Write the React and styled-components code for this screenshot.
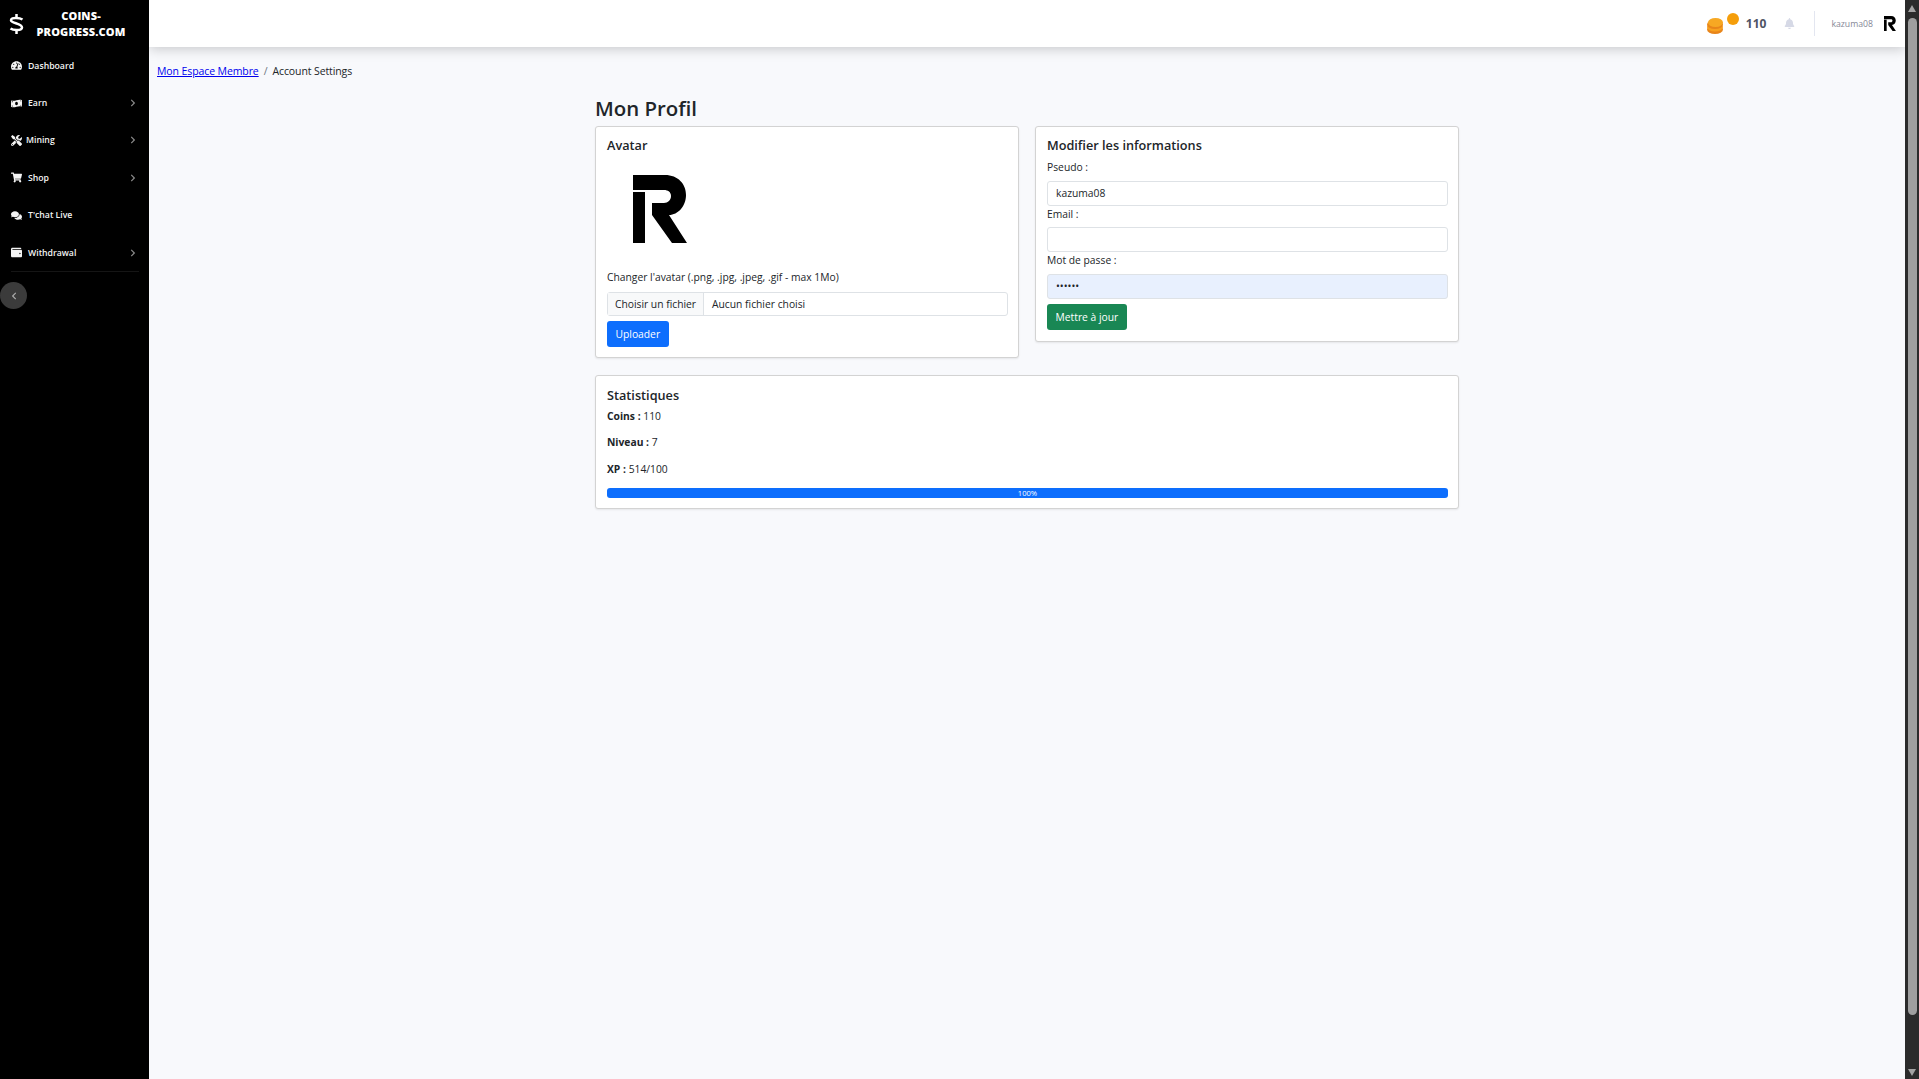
import React from 'react';
import styled, { createGlobalStyle } from 'styled-components';
import { FaTachometerAlt, FaMoneyBillWave, FaTools, FaShoppingCart, FaComments, FaWallet, FaBell, FaChevronRight, FaChevronLeft } from 'react-icons/fa';

const GlobalStyle = createGlobalStyle`
  * { box-sizing: border-box; }
  html, body { margin: 0; padding: 0; height: 100%; overflow: hidden; }
  body {
    background: #f8f9fc;
    font-family: "Open Sans", "Noto Sans", "Liberation Sans", sans-serif;
    color: #212529;
    font-size: 11px;
  }
`;

const Page = styled.div`
  display: flex;
  height: 1079px;
`;

const Sidebar = styled.aside`
  width: 149px;
  flex-shrink: 0;
  background: #000;
  color: #fff;
  display: flex;
  flex-direction: column;
`;

const Brand = styled.div`
  height: 47px;
  display: flex;
  align-items: center;
  padding-left: 9px;
  gap: 5px;
`;

const BrandName = styled.div`
  width: 104px;
  text-align: center;
  font-weight: 800;
  font-size: 11px;
  line-height: 16px;
  letter-spacing: 0.15px;
`;

const Nav = styled.nav`
  display: flex;
  flex-direction: column;
  margin: 0 10px 0 11px;
  border-bottom: 1px solid #151515;
`;

const NavItem = styled.div`
  height: 37.4px;
  display: flex;
  align-items: center;
  gap: ${p => p.$gap || 6}px;
  font-size: 8.7px;
  font-weight: 600;
  color: #f4f4f4;
  > svg { width: 11px; height: 11px; flex-shrink: 0; }
`;

const NavArrow = styled.span`
  margin-left: auto;
  margin-right: 2px;
  color: #8a8a8a;
  display: flex;
  svg { font-size: 8px; }
`;

const Collapse = styled.button`
  width: 27px;
  height: 27px;
  margin: 10px 0 0 0;
  border: 0;
  padding: 0;
  border-radius: 50%;
  background: #3b3b3b;
  color: #aaa;
  display: flex;
  align-items: center;
  justify-content: center;
  svg { font-size: 8px; }
`;

const Main = styled.div`
  flex: 1;
  min-width: 0;
  display: flex;
  flex-direction: column;
`;

const Header = styled.header`
  height: 47px;
  background: #fff;
  box-shadow: 0 2px 12px rgba(0, 0, 0, 0.2);
  display: flex;
  align-items: center;
  justify-content: flex-end;
  padding-right: 9px;
`;

const CoinCount = styled.span`
  font-size: 12px;
  font-weight: 700;
  color: #4f5464;
  margin-left: 7px;
`;

const BellBox = styled.span`
  color: #d6d9e6;
  display: flex;
  margin-left: 18px;
  svg { font-size: 11px; }
`;

const Divider = styled.span`
  width: 1px;
  height: 25px;
  background: #e3e6f0;
  margin: 0 16px 0 19px;
`;

const UserName = styled.span`
  font-size: 8.7px;
  color: #858796;
  margin-right: 11px;
`;

const Content = styled.main`
  flex: 1;
  padding: 16px 8px;
`;

const Crumbs = styled.div`
  font-size: 10.5px;
  letter-spacing: -0.1px;
  line-height: 16px;
  display: flex;
  gap: 5px;
  color: #212529;
  a { color: #0000ee; text-decoration: underline; }
`;

const CrumbSep = styled.span`
  color: #6c757d;
`;

const Column = styled.div`
  width: 864px;
  margin-left: 438px;
`;

const Title = styled.h1`
  margin: 15px 0 4px;
  font-size: 20.4px;
  line-height: 28px;
  font-weight: 600;
  color: #212529;
`;

const Row = styled.div`
  display: flex;
  align-items: flex-start;
  gap: 16px;
`;

const Card = styled.section`
  flex: 1;
  background: #fff;
  border: 1px solid #d3d3d3;
  border-radius: 3px;
  box-shadow: 0 1px 2px rgba(0, 0, 0, 0.08);
  padding: 10px 10px ${p => p.$bottom || 10}px 11px;
`;

const WideCard = styled(Card)`
  margin-top: 17px;
  padding-top: 11px;
`;

const CardTitle = styled.h2`
  margin: 0 0 ${p => p.$gap || 6}px;
  font-size: 12.7px;
  line-height: 17px;
  font-weight: 600;
`;

const AvatarBox = styled.div`
  height: 110px;
  padding: 15px 0 0 26px;
`;

const Label = styled.label`
  display: block;
  font-size: 10.3px;
  line-height: 14px;
  margin-bottom: 6.5px;
`;

const FileInput = styled.div`
  height: 24px;
  display: flex;
  align-items: center;
  border: 1px solid #dee2e6;
  border-radius: 3px;
  font-size: 10.3px;
  margin: 8px 0 5px;
`;

const FileButton = styled.span`
  height: 100%;
  width: 96px;
  display: flex;
  align-items: center;
  justify-content: center;
  background: #f8f9fa;
  border-right: 1px solid #dee2e6;
`;

const FileName = styled.span`
  padding-left: 8px;
`;

const Button = styled.button`
  display: block;
  height: 26px;
  padding: 0 8.5px;
  border: 0;
  border-radius: 3px;
  background: ${p => p.$color};
  color: #fff;
  font-family: inherit;
  font-size: 10.3px;
`;

const Input = styled.input`
  display: block;
  width: 100%;
  height: 25px;
  border: 1px solid #dee2e6;
  border-radius: 3px;
  background: ${p => p.$filled ? '#e8f0fe' : '#fff'};
  padding: 0 8px;
  font-family: inherit;
  font-size: 10.3px;
  color: #212529;
  margin-bottom: ${p => p.$gap}px;
`;

const Stat = styled.p`
  margin: 0 0 ${p => p.$gap}px;
  font-size: 10.3px;
  line-height: 14px;
  b { font-weight: 700; }
`;

const Progress = styled.div`
  height: 10px;
  border-radius: 3px;
  background: #0d6efd;
  color: #fff;
  font-size: 7.6px;
  line-height: 10px;
  text-align: center;
`;

const Scrollbar = styled.div`
  width: 14px;
  flex-shrink: 0;
  background: #2b2b2b;
  display: flex;
  flex-direction: column;
  align-items: center;
  padding: 5px 0 3px;
`;

const ScrollThumb = styled.div`
  width: 9px;
  flex: 1;
  margin: 6px 0 54px;
  border-radius: 5px;
  background: #9f9f9f;
`;

const ScrollArrow = styled.span`
  width: 0;
  height: 0;
  border-left: 4.5px solid transparent;
  border-right: 4.5px solid transparent;
  border-${p => (p.$down ? 'top' : 'bottom')}: 7px solid #a3a3a3;
`;

const RLogo = ({ size }) => (
  <svg width={size} height={size * 1.26} viewBox="0 0 54 68" style={{ display: 'block' }}>
    <path fill="#000" d="M0 0H32C45 0 53 9 53 20C53 31 45 40 36 40L54 68H39L19 40V28H31C35 28 38 25 38 21C38 17 35 15 31 15H0ZM0 17H12V68H0Z" />
  </svg>
);

const DollarMark = () => (
  <svg width="15" height="22" viewBox="0 0 15 22" fill="none" stroke="#fff" strokeWidth="2.5" style={{ flexShrink: 0 }}>
    <path d="M13.5 6.500C11 4.800 2 3.800 2 7.200C2 10.500 13 10 13 14.500C13 18 4 17.300 1.500 15.500" />
    <path d="M7.500 1V4.500M7.500 17.500V21" strokeWidth="2.500" />
  </svg>
);

const CoinStack = () => (
  <svg width="32" height="21" viewBox="0 0 32 21">
    <ellipse cx="8" cy="16.500" rx="8" ry="4.500" fill="#e8851a" />
    <ellipse cx="8" cy="14" rx="8" ry="4.500" fill="#f7a01f" />
    <ellipse cx="8" cy="11.500" rx="8" ry="4.500" fill="#e8851a" />
    <ellipse cx="8.500" cy="9.500" rx="7.500" ry="4.500" fill="#f7a823" />
    <circle cx="26" cy="6" r="6" fill="#f59e0b" />
  </svg>
);

const navItems = [
  { label: 'Dashboard', icon: <FaTachometerAlt /> },
  { label: 'Earn', icon: <FaMoneyBillWave />, arrow: true },
  { label: 'Mining', icon: <FaTools />, arrow: true, gap: 4 },
  { label: 'Shop', icon: <FaShoppingCart />, arrow: true },
  { label: "T'chat Live", icon: <FaComments /> },
  { label: 'Withdrawal', icon: <FaWallet />, arrow: true },
];

export default function App() {
  return (
    <Page>
      <GlobalStyle />
      <Sidebar>
        <Brand>
          <DollarMark />
          <BrandName>COINS-PROGRESS.COM</BrandName>
        </Brand>
        <Nav>
          {navItems.map(item => (
            <NavItem key={item.label} $gap={item.gap}>
              {item.icon}
              {item.label}
              {item.arrow && <NavArrow><FaChevronRight /></NavArrow>}
            </NavItem>
          ))}
        </Nav>
        <Collapse><FaChevronLeft /></Collapse>
      </Sidebar>
      <Main>
        <Header>
          <CoinStack />
          <CoinCount>110</CoinCount>
          <BellBox><FaBell /></BellBox>
          <Divider />
          <UserName>kazuma08</UserName>
          <RLogo size={12} />
        </Header>
        <Content>
          <Crumbs>
            <a href="#">Mon Espace Membre</a>
            <CrumbSep>/</CrumbSep>
            <span>Account Settings</span>
          </Crumbs>
          <Column>
            <Title>Mon Profil</Title>
            <Row>
              <Card>
                <CardTitle>Avatar</CardTitle>
                <AvatarBox><RLogo size={54} /></AvatarBox>
                <Label>Changer l'avatar (.png, .jpg, .jpeg, .gif - max 1Mo)</Label>
                <FileInput>
                  <FileButton>Choisir un fichier</FileButton>
                  <FileName>Aucun fichier choisi</FileName>
                </FileInput>
                <Button $color="#0d6efd">Uploader</Button>
              </Card>
              <Card $bottom={11}>
                <CardTitle>Modifier les informations</CardTitle>
                <Label>Pseudo :</Label>
                <Input defaultValue="kazuma08" $gap={1} />
                <Label>Email :</Label>
                <Input $gap={1} />
                <Label>Mot de passe :</Label>
                <Input type="password" defaultValue="123456" $filled $gap={5.5} />
                <Button $color="#198754">Mettre à jour</Button>
              </Card>
            </Row>
            <WideCard>
              <CardTitle $gap={5}>Statistiques</CardTitle>
              <Stat $gap={12}><b>Coins :</b> 110</Stat>
              <Stat $gap={13}><b>Niveau :</b> 7</Stat>
              <Stat $gap={12}><b>XP :</b> 514/100</Stat>
              <Progress>100%</Progress>
            </WideCard>
          </Column>
        </Content>
      </Main>
      <Scrollbar>
        <ScrollArrow />
        <ScrollThumb />
        <ScrollArrow $down />
      </Scrollbar>
    </Page>
  );
}
